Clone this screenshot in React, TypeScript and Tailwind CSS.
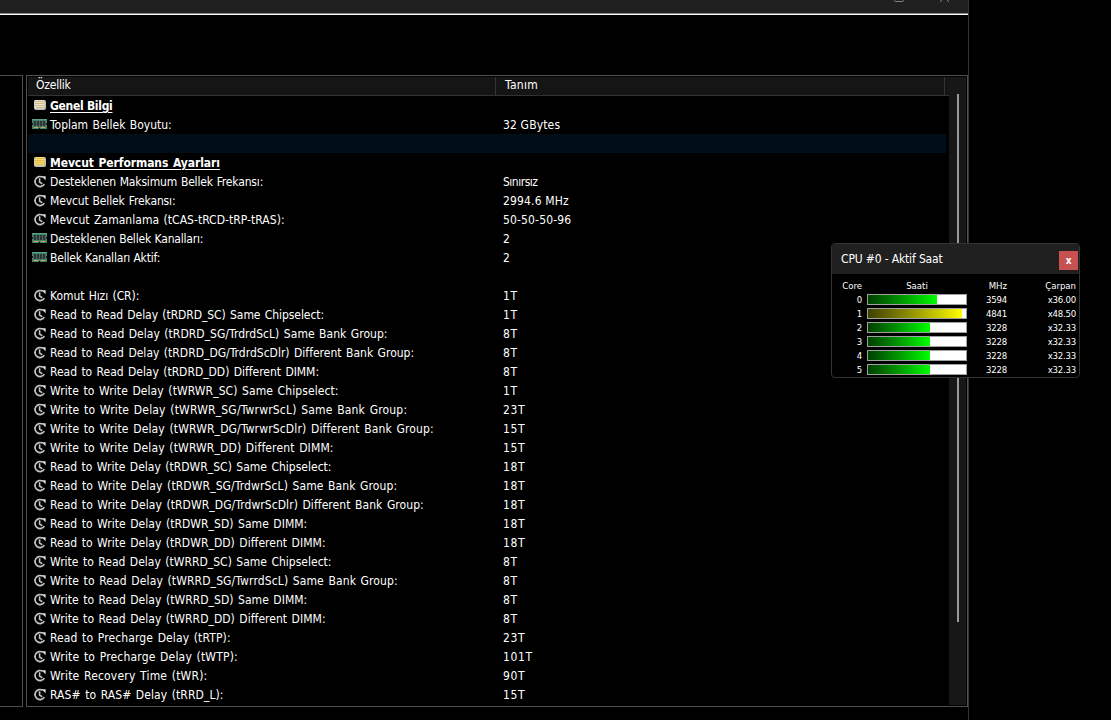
type Icon = 'chip' | 'chipGold' | 'ram' | 'clock';

interface Row {
  icon?: Icon;
  label?: string;
  value?: string;
  heading?: boolean;
  selected?: boolean;
  // extra pixels spread over the label's letters
  grow?: number;
}

const rows: Row[] = [
  { icon: 'chip', label: 'Genel Bilgi', heading: true, grow: -1 },
  { icon: 'ram', label: 'Toplam Bellek Boyutu:', value: '32 GBytes', grow: 6 },
  { selected: true },
  { icon: 'chipGold', label: 'Mevcut Performans Ayarları', heading: true, grow: 5 },
  { icon: 'clock', label: 'Desteklenen Maksimum Bellek Frekansı:', value: 'Sınırsız', grow: 3 },
  { icon: 'clock', label: 'Mevcut Bellek Frekansı:', value: '2994.6 MHz', grow: 3 },
  { icon: 'clock', label: 'Mevcut Zamanlama (tCAS-tRCD-tRP-tRAS):', value: '50-50-50-96', grow: 11 },
  { icon: 'ram', label: 'Desteklenen Bellek Kanalları:', value: '2', grow: 1 },
  { icon: 'ram', label: 'Bellek Kanalları Aktif:', value: '2', grow: 0 },
  {},
  { icon: 'clock', label: 'Komut Hızı (CR):', value: '1T', grow: 4 },
  { icon: 'clock', label: 'Read to Read Delay (tRDRD_SC) Same Chipselect:', value: '1T', grow: 12 },
  { icon: 'clock', label: 'Read to Read Delay (tRDRD_SG/TrdrdScL) Same Bank Group:', value: '8T', grow: 20 },
  { icon: 'clock', label: 'Read to Read Delay (tRDRD_DG/TrdrdScDlr) Different Bank Group:', value: '8T', grow: 20 },
  { icon: 'clock', label: 'Read to Read Delay (tRDRD_DD) Different DIMM:', value: '8T', grow: 14 },
  { icon: 'clock', label: 'Write to Write Delay (tWRWR_SC) Same Chipselect:', value: '1T', grow: 20 },
  { icon: 'clock', label: 'Write to Write Delay (tWRWR_SG/TwrwrScL) Same Bank Group:', value: '23T', grow: 29 },
  { icon: 'clock', label: 'Write to Write Delay (tWRWR_DG/TwrwrScDlr) Different Bank Group:', value: '15T', grow: 29 },
  { icon: 'clock', label: 'Write to Write Delay (tWRWR_DD) Different DIMM:', value: '15T', grow: 22 },
  { icon: 'clock', label: 'Read to Write Delay (tRDWR_SC) Same Chipselect:', value: '18T', grow: 16 },
  { icon: 'clock', label: 'Read to Write Delay (tRDWR_SG/TrdwrScL) Same Bank Group:', value: '18T', grow: 24 },
  { icon: 'clock', label: 'Read to Write Delay (tRDWR_DG/TrdwrScDlr) Different Bank Group:', value: '18T', grow: 24 },
  { icon: 'clock', label: 'Read to Write Delay (tRDWR_SD) Same DIMM:', value: '18T', grow: 16 },
  { icon: 'clock', label: 'Read to Write Delay (tRDWR_DD) Different DIMM:', value: '18T', grow: 17 },
  { icon: 'clock', label: 'Write to Read Delay (tWRRD_SC) Same Chipselect:', value: '8T', grow: 16 },
  { icon: 'clock', label: 'Write to Read Delay (tWRRD_SG/TwrrdScL) Same Bank Group:', value: '8T', grow: 25 },
  { icon: 'clock', label: 'Write to Read Delay (tWRRD_SD) Same DIMM:', value: '8T', grow: 16 },
  { icon: 'clock', label: 'Write to Read Delay (tWRRD_DD) Different DIMM:', value: '8T', grow: 17 },
  { icon: 'clock', label: 'Read to Precharge Delay (tRTP):', value: '23T', grow: 14 },
  { icon: 'clock', label: 'Write to Precharge Delay (tWTP):', value: '101T', grow: 16 },
  { icon: 'clock', label: 'Write Recovery Time (tWR):', value: '90T', grow: 13 },
  { icon: 'clock', label: 'RAS# to RAS# Delay (tRRD_L):', value: '15T', grow: 12 },
];

const cores = [
  { id: 0, mhz: 3594, ratio: 'x36.00', fill: 69 },
  { id: 1, mhz: 4841, ratio: 'x48.50', fill: 94, hot: true },
  { id: 2, mhz: 3228, ratio: 'x32.33', fill: 62 },
  { id: 3, mhz: 3228, ratio: 'x32.33', fill: 62 },
  { id: 4, mhz: 3228, ratio: 'x32.33', fill: 62 },
  { id: 5, mhz: 3228, ratio: 'x32.33', fill: 62 },
];

function labelSpacing(label: string, grow: number) {
  const words = label.split(' ').length - 1;
  const wordSpacing = Math.min(1, Math.max(0, grow / words / 2));
  return {
    wordSpacing: `${wordSpacing}px`,
    letterSpacing: `${-0.2 + (grow - words * wordSpacing) / label.length}px`,
  };
}

function valueTracking(value: string) {
  if (value.endsWith('T')) return 'tracking-[0.6px]';
  if (value.startsWith('S')) return 'tracking-[-0.5px]';
  return 'tracking-[0.15px]';
}

function RowIcon({ icon }: { icon: Icon }) {
  if (icon === 'ram') {
    return (
      <svg className="shrink-0" width="16" height="19" viewBox="0 0 16 19" shapeRendering="crispEdges">
        <rect x="0" y="4" width="15" height="10" fill="#3f8768" />
        <rect x="0" y="4" width="15" height="1" fill="#5ba283" />
        <rect x="0" y="8" width="1" height="2" fill="#14251d" />
        <rect x="14" y="8" width="1" height="2" fill="#14251d" />
        <rect x="1" y="6" width="13" height="5" fill="#4b6a60" />
        <path d="M2 6h2v5H2zM5 6h2v5H5zM8 6h2v5H8zM11 6h2v5h-2z" fill="#303638" />
        <path d="M2 12h4v1H2zM9 12h4v1H9z" fill="#e29a55" />
        <rect x="7" y="13" width="1" height="1" fill="#000" />
      </svg>
    );
  }
  if (icon === 'clock') {
    return (
      <svg className="shrink-0" width="16" height="19" viewBox="0 0 16 19" fill="none" stroke="#c4c4c4">
        <path d="M10.7 5.3A5 5 0 1 0 12.3 12.1" strokeWidth="1.7" />
        <path d="M7.6 6.2v3.9l2.7 1.7" strokeWidth="1.6" />
        <path d="M9.7 4.2h3.9v4z" fill="#e2e2e2" stroke="none" />
      </svg>
    );
  }
  const gold = icon === 'chipGold';
  return (
    <svg className="shrink-0" width="16" height="19" viewBox="0 0 16 19">
      <rect x="2" y="4" width="12" height="10" rx="2" fill="#bdbdbd" />
      <rect x="2.5" y="4" width="10" height="8.5" rx="1" fill={gold ? '#f5dc7c' : '#e6e2d4'} />
      <path
        d="M3 5.5h9M3 7.5h9M3 9.5h10M4 11.5h9"
        stroke={gold ? '#dcae35' : '#c9b26a'}
        strokeWidth=".8"
      />
    </svg>
  );
}

function PropertyRow({ row }: { row: Row }) {
  return (
    <div className={row.selected ? 'flex h-[19px] w-[918px] bg-[#010d17]' : 'flex h-[19px] w-[918px]'}>
      <div className="flex w-[475px] shrink-0 pl-1">
        {row.icon && <RowIcon icon={row.icon} />}
        {row.label && (
          <span
            className={
              row.heading
                ? 'ml-0.5 leading-[20px] font-bold underline underline-offset-2'
                : 'ml-0.5 leading-[21px]'
            }
            style={labelSpacing(row.label, row.grow ?? 0)}
          >
            {row.label}
          </span>
        )}
      </div>
      {row.value && <span className={`leading-[21px] ${valueTracking(row.value)}`}>{row.value}</span>}
    </div>
  );
}

function ClockWindow() {
  return (
    <div className="absolute top-[243px] left-[831px] h-[135px] w-[249px] overflow-hidden rounded-[4px] border border-[#333] bg-black">
      <div className="flex h-[30px] justify-between bg-[#202020] pr-px pl-[9px]">
        <span className="leading-[30px] tracking-[-0.15px]">CPU #0 - Aktif Saat</span>
        <button className="mt-[7px] h-[19px] w-[19px] bg-[#c75050] text-[10px] leading-[18px] font-bold">x</button>
      </div>
      <div className="pt-[5px] pr-[3px] text-[9.5px] leading-[14px] tracking-[-0.2px]">
        <div className="flex h-[14px] tracking-normal">
          <span className="w-[30px] text-right">Core</span>
          <span className="ml-[5px] w-[100px] text-center">Saati</span>
          <span className="w-[40px] text-right">MHz</span>
          <span className="flex-1 text-right">Çarpan</span>
        </div>
        {cores.map((core) => (
          <div key={core.id} className="flex h-[14px]">
            <span className="w-[30px] text-right">{core.id}</span>
            <div className="mt-px ml-[5px] h-[11px] w-[100px] border border-[#a0a0a0] bg-white">
              <div
                className={
                  core.hot
                    ? 'h-full bg-linear-to-r from-[#404000] to-[#ffff00]'
                    : 'h-full bg-linear-to-r from-[#004000] to-[#00ff00]'
                }
                style={{ width: core.fill }}
              />
            </div>
            <span className="w-[40px] text-right">{core.mhz}</span>
            <span className="flex-1 text-right">{core.ratio}</span>
          </div>
        ))}
      </div>
    </div>
  );
}

export default function App() {
  return (
    <div className="relative h-[720px] w-[1111px] overflow-hidden bg-black font-['DejaVu_Sans_Condensed','DejaVu_Sans',sans-serif] text-[12px] tracking-[-0.2px] whitespace-pre text-white [font-stretch:condensed]">
      <div className="h-full w-[969px] border-r border-[#333]">
        <div className="border-b border-white">
          <div className="flex h-[14px] justify-end border-b border-[#858585] bg-[#202020]">
            <svg width="80" height="13" viewBox="0 0 80 13" fill="none">
              <path d="M6.5 0v.5a1 1 0 0 0 1 1h7a1 1 0 0 0 1-1V0" stroke="#858585" />
              <path d="M52 1.8 54 0M61 1.8 59 0" stroke="#858585" />
            </svg>
          </div>
        </div>
        <div className="flex h-[692px] gap-[3px] pt-[60px]">
          <div className="w-[23px] border-y border-r border-[#505050]" />
          <div className="flex flex-1 border border-[#505050] p-px">
            <div className="w-[921px]">
              <div className="flex h-[19px] border-b border-[#333] bg-[#151515] leading-[17px]">
                <span className="w-[468px] border-r border-[#333] pl-2">Özellik</span>
                <span className="w-[449px] border-r border-[#333] pl-[9px] tracking-[0.3px]">Tanım</span>
              </div>
              {rows.map((row, i) => (
                <PropertyRow key={i} row={row} />
              ))}
            </div>
            <div className="w-[17px] bg-[#171717] pt-[17px] pl-2">
              <div className="h-[528px] w-0.5 bg-[#9a9a9a]" />
            </div>
          </div>
        </div>
      </div>
      <ClockWindow />
    </div>
  );
}
